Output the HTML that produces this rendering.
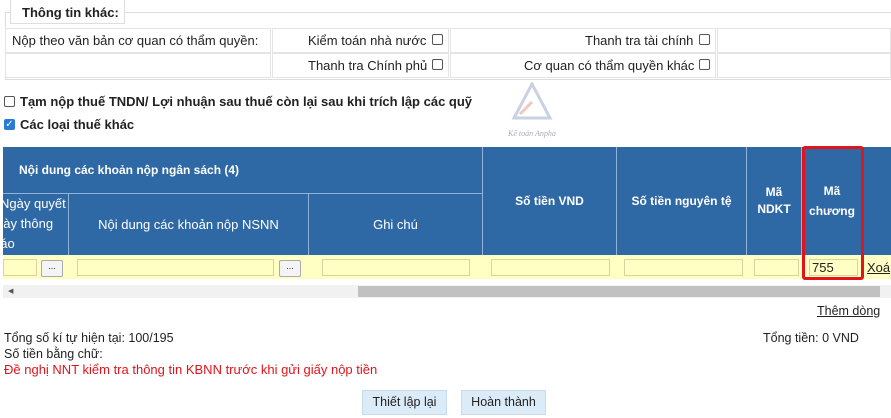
<!DOCTYPE html>
<html><head><meta charset="utf-8"><style>
*{margin:0;padding:0;box-sizing:border-box}
body{width:891px;height:418px;background:#fff;position:relative;overflow:hidden;font-family:"Liberation Sans",Arial,sans-serif;font-size:13px;color:#222}
.a{position:absolute;white-space:nowrap}
.cb{position:absolute;width:11px;height:11px;border:1px solid #555;border-radius:2px;background:#fff}
.h{position:absolute;background:#2f69a5;color:#fff;font-weight:bold;font-size:12px;display:flex;align-items:center;justify-content:center;text-align:center;line-height:17px}
.in{position:absolute;height:17px;background:#ffffc4;border:1px solid #d8d3a0}
.bt{position:absolute;height:17px;background:#f4f4f4;border:1px solid #aaa;border-radius:2px;font-size:9px;text-align:center;line-height:10px}
.c{position:absolute;border:1px solid #e4e4e4}
</style></head><body>
<div class="a" style="left:5px;top:12px;width:886px;height:68px;border-top:1px solid #ddd;border-left:1px solid #ddd;border-bottom:1px solid #ddd"></div>
<div class="a" style="left:10px;top:0;width:115px;height:24px;background:#fff;border:1px solid #ddd;border-top:none;font-weight:bold;font-size:13px;padding:5px 0 0 11px">Thông tin khác:</div>
<div class="c" style="left:5px;top:28px;width:266px;height:25px"></div>
<div class="c" style="left:272px;top:28px;width:177px;height:25px"></div>
<div class="c" style="left:450px;top:28px;width:266px;height:25px"></div>
<div class="c" style="left:717px;top:28px;width:174px;height:25px"></div>
<div class="c" style="left:5px;top:53px;width:266px;height:25px"></div>
<div class="c" style="left:272px;top:53px;width:177px;height:25px"></div>
<div class="c" style="left:450px;top:53px;width:266px;height:25px"></div>
<div class="c" style="left:717px;top:53px;width:174px;height:25px"></div>
<div class="a" style="left:12px;top:33px">Nộp theo văn bản cơ quan có thẩm quyền:</div>
<div class="a" style="left:308px;top:33px">Kiểm toán nhà nước</div><div class="cb" style="left:432px;top:34px"></div>
<div class="a" style="left:585px;top:33px">Thanh tra tài chính</div><div class="cb" style="left:699px;top:34px"></div>
<div class="a" style="left:308px;top:58px">Thanh tra Chính phủ</div><div class="cb" style="left:432px;top:59px"></div>
<div class="a" style="left:524px;top:58px">Cơ quan có thẩm quyền khác</div><div class="cb" style="left:699px;top:59px"></div>
<div class="cb" style="left:4px;top:96px"></div>
<div class="a" style="left:20px;top:94px;font-weight:bold">Tạm nộp thuế TNDN/ Lợi nhuận sau thuế còn lại sau khi trích lập các quỹ</div>
<div class="cb" style="left:4px;top:119px;background:#2a7ad6;border-color:#2a7ad6;color:#fff;font-size:10px;line-height:9px;text-align:center">✓</div>
<div class="a" style="left:20px;top:117px;font-weight:bold">Các loại thuế khác</div>
<svg class="a" style="left:506px;top:82px" width="60" height="60"><path d="M26 2 L44 36 L8 36 Z" fill="none" stroke="#c8d2e4" stroke-width="3"/><path d="M14 32 L26 20" stroke="#f0c8c0" stroke-width="3"/><text x="2" y="54" font-size="8" font-style="italic" fill="#aab" font-family="Liberation Serif">Kế toán Anpha</text></svg>
<div class="a" style="left:3px;top:147px;width:888px;height:108px;background:#2f69a5"></div>
<div class="h" style="left:3px;top:147px;width:479px;height:46px;justify-content:flex-start;padding-left:16px">Nội dung các khoản nộp ngân sách (4)</div>
<div class="a" style="left:3px;top:193px;width:479px;height:1px;background:#8fb3d9"></div>
<div class="a" style="left:68px;top:193px;width:1px;height:62px;background:#8fb3d9"></div>
<div class="a" style="left:308px;top:193px;width:1px;height:62px;background:#8fb3d9"></div>
<div class="a" style="left:482px;top:147px;width:1px;height:108px;background:#8fb3d9"></div>
<div class="a" style="left:616px;top:147px;width:1px;height:108px;background:#8fb3d9"></div>
<div class="a" style="left:746px;top:147px;width:1px;height:108px;background:#8fb3d9"></div>
<div class="a" style="left:801px;top:147px;width:1px;height:108px;background:#8fb3d9"></div>
<div class="a" style="left:3px;top:194px;width:65px;height:61px;overflow:hidden;color:#fff;font-size:13px;line-height:20px"><div style="margin-left:-3px">Ngày quyết</div><div style="margin-left:-7px">gày thông</div><div style="margin-left:-10px">báo</div></div>
<div class="h" style="left:69px;top:194px;width:239px;height:61px;font-weight:normal;font-size:13px">Nội dung các khoản nộp NSNN</div>
<div class="h" style="left:309px;top:194px;width:173px;height:61px;font-weight:normal;font-size:13px">Ghi chú</div>
<div class="h" style="left:483px;top:147px;width:133px;height:108px">Số tiền VND</div>
<div class="h" style="left:617px;top:147px;width:129px;height:108px">Số tiền nguyên tệ</div>
<div class="h" style="left:747px;top:147px;width:54px;height:108px">Mã<br>NDKT</div>
<div class="h" style="left:802px;top:147px;width:60px;height:108px;line-height:20px">Mã<br>chương</div>
<div class="a" style="left:3px;top:255px;width:888px;height:24px;background:#ffffc4"></div>
<div class="in" style="left:3px;top:259px;width:34px"></div>
<div class="bt" style="left:41px;top:260px;width:22px">...</div>
<div class="in" style="left:77px;top:259px;width:197px"></div>
<div class="bt" style="left:279px;top:260px;width:22px">...</div>
<div class="in" style="left:322px;top:259px;width:148px"></div>
<div class="in" style="left:491px;top:259px;width:119px"></div>
<div class="in" style="left:624px;top:259px;width:119px"></div>
<div class="in" style="left:754px;top:259px;width:45px"></div>
<div class="in" style="left:809px;top:259px;width:49px;font-size:13px;line-height:15px;padding-left:2px">755</div>
<div class="a" style="left:867px;top:260px;text-decoration:underline;font-size:13px">Xoá</div>
<div class="a" style="left:802px;top:146px;width:62px;height:134px;border:3px solid #e0141a;border-radius:3px"></div>
<div class="a" style="left:3px;top:285px;width:888px;height:13px;background:#f1f1f1"></div>
<div class="a" style="left:358px;top:286px;width:522px;height:11px;background:#c1c1c1"></div>
<div class="a" style="left:8px;top:287px;font-size:7px;color:#555">◀</div>
<div class="a" style="left:817px;top:304px;font-size:12.5px;text-decoration:underline">Thêm dòng</div>
<div class="a" style="left:4px;top:331px;font-size:12.5px">Tổng số kí tự hiện tại: 100/195</div>
<div class="a" style="left:763px;top:331px;font-size:12.5px">Tổng tiền: 0 VND</div>
<div class="a" style="left:4px;top:347px;font-size:12.5px">Số tiền bằng chữ:</div>
<div class="a" style="left:4px;top:362px;font-size:13px;color:#e0141a">Đề nghị NNT kiểm tra thông tin KBNN trước khi gửi giấy nộp tiền</div>
<div class="a" style="left:362px;top:390px;width:85px;height:25px;background:#dcebf8;border:1px solid #c6dced;font-size:12.5px;text-align:center;line-height:23px">Thiết lập lại</div>
<div class="a" style="left:461px;top:390px;width:85px;height:25px;background:#dcebf8;border:1px solid #c6dced;font-size:12.5px;text-align:center;line-height:23px">Hoàn thành</div>
</body></html>
